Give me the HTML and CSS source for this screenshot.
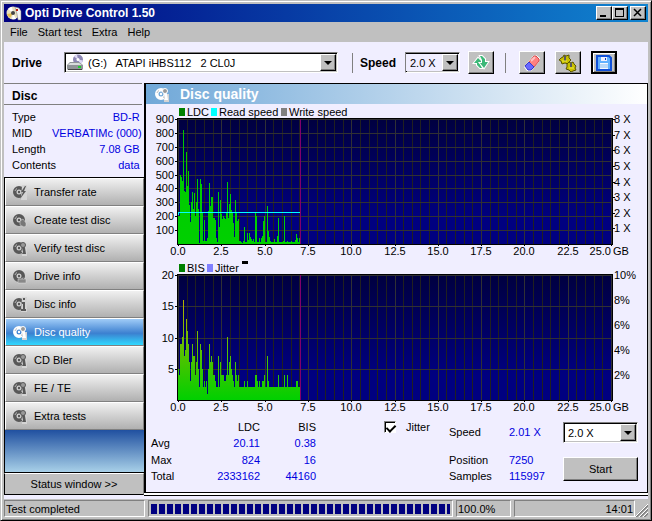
FILE: index.html
```
<!DOCTYPE html>
<html lang="en">

<head>
    <meta charset="UTF-8">
    <title>Opti Drive Control 1.50</title>
    <link rel="stylesheet" href="styles.css">
</head>

<body>
    <svg class="defs" width="0" height="0" aria-hidden="true">
        <defs>
            <symbol id="disc" viewBox="0 0 15 15">
                <path fill="currentColor" fill-rule="evenodd" d="M7 1a6 6 0 1 0 0 12a6 6 0 1 0 0-12zM7 4.500a2.500 2.500 0 1 1 0 5a2.500 2.500 0 1 1 0-5z" />
                <circle cx="7" cy="7" r="1.200" fill="currentColor" />
                <path class="shine" d="M3 6a4 4 0 0 1 2-2.500M11 8.500a4 4 0 0 1-2 2" />
            </symbol>
            <symbol id="magnify" viewBox="0 0 15 15">
                <use href="#disc" />
                <path class="gap" d="M10 7h5v8h-5z" />
                <circle class="lens" cx="11" cy="4" r="2.500" />
                <path fill="currentColor" d="M10 7h3l1 6h-4l1-2z" />
            </symbol>
        </defs>
    </svg>

    <div class="window">
        <header class="title">
            <svg width="16" height="16" viewBox="0 0 16 16">
                <circle cx="7" cy="8" r="6.500" fill="#e8e0c0" />
                <path d="M7 8L2 4a6 6 0 0 1 4-2zM7 8l3 6a6 6 0 0 1-4 0z" fill="#fff" />
                <path d="M7 8L1 9a6 6 0 0 0 3 4z" fill="#e8c050" />
                <circle cx="7" cy="8" r="2" fill="#444" />
                <path d="M9 2l4 1 2 3v9h-3l-1-6z" fill="#f4f4f4" stroke="#777" stroke-width=".5" />
                <path d="M10 4h2v2h-2z" fill="#c02010" />
            </svg>
            <h1>Opti Drive Control 1.50</h1>
            <button class="cap" aria-label="Minimize"><svg width="12" height="10"><path d="M2 7h6v2H2z" /></svg></button>
            <button class="cap" aria-label="Maximize"><svg width="12" height="10"><path fill-rule="evenodd" d="M1 0h9v9H1zM2 2v6h7V2z" /></svg></button>
            <button class="cap close" aria-label="Close"><svg width="12" height="10"><path d="M2 1l7 7M9 1l-7 7" stroke="#000" stroke-width="1.500" /></svg></button>
        </header>

        <nav class="menu">
            <a href="#">File</a>
            <a href="#">Start test</a>
            <a href="#">Extra</a>
            <a href="#">Help</a>
        </nav>

        <div class="toolbar">
            <label class="drive-label" for="drive">Drive</label>
            <div class="combo drive">
                <svg class="drive-icon" width="17" height="17" viewBox="0 0 17 17">
                    <circle cx="11" cy="5.500" r="5" fill="#8c86b4" />
                    <path d="M11 5.500l-4-3a5 5 0 0 1 3-2zM11 5.500l5 1a5 5 0 0 1-3 3.500z" fill="#ddd8f4" />
                    <circle cx="11" cy="5.500" r="1.500" fill="#fff" />
                    <path d="M3 8h9l4 3v4l-1 1H1l-1-1v-4z" fill="#909498" />
                    <path d="M3 9h9l3 2H1z" fill="#d8dcdc" />
                    <path d="M1 15h14v1H1z" fill="#444" />
                    <path d="M11 12h3v2h-3z" fill="#20d030" />
                </svg>
                <select id="drive">
                    <option>(G:)&nbsp;&nbsp; ATAPI iHBS112 &nbsp;&nbsp;2 CL0J</option>
                </select>
                <span class="arrow"></span>
            </div>
            <span class="sep"></span>
            <label class="speed-label" for="speed">Speed</label>
            <div class="combo speed">
                <select id="speed">
                    <option>2.0 X</option>
                </select>
                <span class="arrow"></span>
            </div>
            <button class="tool" aria-label="Refresh">
                <svg width="18" height="18" viewBox="0 0 18 18">
                    <g fill="#3cb878" stroke="#fff" stroke-width="2" paint-order="stroke">
                        <path d="M2 9l4-5 4 4H8v2l2 4H8L5 11V9z" />
                        <path d="M16 8l-4 6-4-5h2V6L8 2h2l3 3v3z" />
                    </g>
                </svg>
            </button>
            <span class="sep"></span>
            <button class="tool" aria-label="Erase">
                <svg width="18" height="18" viewBox="0 0 18 18">
                    <path d="M1 13l9-11 3-1 4 3-1 4-8 9H4z" fill="#fff" />
                    <path d="M6 8l5-6h2l3 3v2l-5 6z" fill="#ff8080" stroke="#d84848" />
                    <path d="M2 12l4-4 5 5-3 3H5z" fill="#6868ff" stroke="#3838d0" />
                    <path d="M8 7l4-4" stroke="#ffc0c0" stroke-width="2" />
                </svg>
            </button>
            <button class="tool" aria-label="Options">
                <svg width="18" height="18" viewBox="0 0 18 18">
                    <g fill="#c8c000" stroke="#585400">
                        <path d="M2 4l2-1 1-2 2 1 3-1v3l2 2-2 2-1 2-3-1-3 1-1-3-2-1z" />
                        <path d="M8 10l2-2 2 1 2-1 1 2 2 2-1 2 1 2-3 1-2 1-2-2-3-1 1-2z" />
                    </g>
                    <path d="M6 2v5M12 9v4" stroke="#585860" stroke-width="2" />
                    <path d="M3 7h5M10 14h5" stroke="#eee840" />
                </svg>
            </button>
            <button class="tool default" aria-label="Save">
                <svg width="16" height="16" viewBox="0 0 16 16">
                    <path d="M1 1h12l2 2v12H1z" fill="#60b0ff" stroke="#1050d8" stroke-width="2" />
                    <path d="M5 2h6v4H5z" fill="#f0f0ff" />
                    <path d="M9 3h1v2H9z" fill="#0838c0" />
                    <path d="M4 8h8v6H4z" fill="#f4f8ff" />
                    <path d="M4 10h8M4 12h8" stroke="#80b8f0" />
                </svg>
            </button>
        </div>

        <main class="main">
            <aside class="side">
                <h2>Disc</h2>
                <dl class="info">
                    <dt>Type</dt>
                    <dd>BD-R</dd>
                    <dt>MID</dt>
                    <dd class="mid">VERBATIMc (000)</dd>
                    <dt>Length</dt>
                    <dd>7.08 GB</dd>
                    <dt>Contents</dt>
                    <dd>data</dd>
                </dl>
                <div class="tests">
                    <button><svg width="15" height="15"><use href="#disc" /><path class="gap" d="M10 0h5v15H9z" /><path fill="currentColor" d="M13 1l-4 6h2l-3 7 6-8h-2l2-5z" /></svg>Transfer rate</button>
                    <button><svg width="15" height="15"><use href="#disc" /><path fill="#777" stroke="#ddd" stroke-width=".5" d="M8 8l3-2 3 4v3l-2 1-4-2z" /></svg>Create test disc</button>
                    <button><svg width="15" height="15"><use href="#magnify" /></svg>Verify test disc</button>
                    <button><svg width="15" height="15"><use href="#disc" /><path fill="#888" stroke="#ddd" stroke-width=".5" d="M6 10h8v4H6z" /></svg>Drive info</button>
                    <button><svg width="15" height="15"><use href="#disc" /><path class="gap" d="M10 0h5v15H9z" /><path fill="currentColor" d="M11 1h2v2h-2zM10 5h3v7h1v2H9v-2h2V7h-1z" /></svg>Disc info</button>
                    <button class="active"><svg width="15" height="15"><use href="#magnify" /></svg>Disc quality</button>
                    <button><svg width="15" height="15"><use href="#magnify" /></svg>CD Bler</button>
                    <button><svg width="15" height="15"><use href="#magnify" /></svg>FE / TE</button>
                    <button><svg width="15" height="15"><use href="#magnify" /></svg>Extra tests</button>
                </div>
                <button class="status-btn">Status window &gt;&gt;</button>
            </aside>

            <section class="panel">
                <h2><svg width="15" height="15"><use href="#magnify" /></svg>Disc quality</h2>
                <svg class="chart" id="ldc" viewBox="0 0 501 156"></svg>
                <svg class="chart" id="bis" viewBox="0 0 501 156"></svg>

                <div class="results">
                    <table>
                        <tr><th></th><th>LDC</th><th>BIS</th></tr>
                        <tr><th>Avg</th><td>20.11</td><td>0.38</td></tr>
                        <tr><th>Max</th><td>824</td><td>16</td></tr>
                        <tr><th>Total</th><td>2333162</td><td>44160</td></tr>
                    </table>
                    <label class="jitter"><input type="checkbox" checked>Jitter</label>
                    <dl class="progress-info">
                        <dt>Speed</dt>
                        <dd>2.01 X</dd>
                        <dt>Position</dt>
                        <dd>7250</dd>
                        <dt>Samples</dt>
                        <dd>115997</dd>
                    </dl>
                    <div class="run">
                        <div class="combo">
                            <select aria-label="Test speed">
                                <option>2.0 X</option>
                            </select>
                            <span class="arrow"></span>
                        </div>
                        <button class="start">Start</button>
                    </div>
                </div>
            </section>
        </main>

        <footer class="status">
            <div class="cell msg">Test completed</div>
            <div class="cell bar" role="progressbar" aria-valuenow="100" aria-label="Progress"><div></div></div>
            <div class="cell pct">100.0%</div>
            <div class="cell clock">14:01</div>
            <svg class="grip" width="13" height="13"><path d="M1 13L13 1M5 13l8-8M9 13l4-4" stroke="#808080" stroke-width="2" /><path d="M0 13L13 0M4 13l9-9M8 13l5-5" stroke="#fff" /></svg>
        </footer>
    </div>

    <script src="script.js"></script>
</body>

</html>
```
FILE: styles.css
```
* {
    box-sizing: border-box;
    margin: 0;
    padding: 0;
}

body {
    font-family: "Liberation Sans", Arial, sans-serif;
    font-size: 11px;
    line-height: 16px;
    color: #000;
}

button,
select,
input {
    font: inherit;
    color: inherit;
}

.defs {
    position: absolute;
}

.window {
    min-height: 100vh;
    display: flex;
    flex-direction: column;
    padding: 3px;
    background: #c0c0c0;
    border: 1px solid;
    border-color: #c0c0c0 #000 #000 #c0c0c0;
    box-shadow: inset 1px 1px #fff, inset -1px -1px #808080;
}

/* title bar */
.title {
    height: 18px;
    display: flex;
    align-items: center;
    padding: 0 2px;
    background: linear-gradient(to right, #000080, #1084d0);
}

.title h1 {
    flex: 1;
    margin-left: 3px;
    font-size: 12px;
    color: #fff;
}

.cap {
    width: 16px;
    height: 14px;
    background: #c0c0c0;
    border: 1px solid;
    border-color: #fff #000 #000 #fff;
    box-shadow: inset -1px -1px #808080;
}

.cap svg {
    display: block;
    margin: 1px;
}

.close {
    margin-left: 2px;
}

.menu {
    height: 20px;
    display: flex;
    gap: 10px;
    padding: 2px 6px;
}

.menu a {
    color: #000;
    text-decoration: none;
}

/* toolbar */
.toolbar {
    height: 41px;
    display: flex;
    align-items: center;
    padding: 0 31px 0 8px;
    background: #f0eeff;
}

.drive-label,
.speed-label {
    font-size: 12px;
    font-weight: bold;
}

.drive-label {
    width: 52px;
}

.speed-label {
    width: 45px;
}

.combo {
    position: relative;
    height: 21px;
    display: flex;
    align-items: center;
    background: #fff;
    border: 1px solid;
    border-color: #808080 #fff #fff #808080;
    box-shadow: inset 1px 1px #000, inset -1px -1px #c0c0c0;
}

.combo select {
    flex: 1;
    min-width: 0;
    height: 17px;
    padding-left: 4px;
    border: 0;
    background: none;
    appearance: none;
}

.drive {
    flex: 1;
}

.drive-icon {
    margin-left: 2px;
}

.speed {
    width: 55px;
    margin-right: 8px;
}

.speed,
.speed select {
    background: #f0eeff;
}

.arrow {
    position: absolute;
    top: 1px;
    right: 1px;
    bottom: 1px;
    width: 16px;
    background: #c0c0c0;
    border: 1px solid;
    border-color: #fff #000 #000 #fff;
    box-shadow: inset -1px -1px #808080;
    pointer-events: none;
}

.arrow::after {
    content: "";
    position: absolute;
    top: 6px;
    left: 3px;
    border: 4px solid transparent;
    border-top-color: #000;
    border-bottom: 0;
}

.sep {
    width: 1px;
    height: 20px;
    margin: 0 7px 0 14px;
    background: #808080;
}

.tool {
    width: 26px;
    height: 23px;
    display: flex;
    align-items: center;
    justify-content: center;
    background: #c0c0c0;
    border: 1px solid;
    border-color: #fff #000 #000 #fff;
    box-shadow: inset -1px -1px #808080;
}

.tool + .sep {
    margin: 0 13px 0 11px;
}

.tool + .tool {
    margin-left: 10px;
}

.default {
    border: 2px solid #000;
    box-shadow: inset 1px 1px #fff, inset -1px -1px #808080;
}

/* left column */
.main {
    flex: 1;
    display: flex;
    background: #f0eeff;
}

.side {
    width: 140px;
    margin-bottom: 4px;
    display: flex;
    flex-direction: column;
}

.side h2 {
    height: 22px;
    margin-right: 2px;
    padding: 4px 8px;
    line-height: 16px;
    font-size: 12px;
    border-top: 1px solid #808080;
    border-bottom: 1px solid #808080;
}

.info {
    display: grid;
    grid-template-columns: 40px 1fr;
    padding: 4px 5px 4px 8px;
    height: 72px;
    grid-auto-rows: 16px;
}

dd {
    color: #0000e0;
}

.info dd {
    text-align: right;
}

.info .mid {
    margin-right: -2px;
    white-space: nowrap;
}

.tests {
    flex: 1;
    border: solid #000;
    border-width: 1px 0 1px 1px;
    background: linear-gradient(#2050a0 252px, #a8d0e8);
}

.tests button {
    width: 100%;
    height: 28px;
    display: flex;
    align-items: center;
    gap: 7px;
    padding-left: 6px;
    color: #000;
    background: linear-gradient(#f0f0f0, #b0b0b0);
    border: 1px solid;
    border-color: #fff #808080 #808080 #fff;
}

.tests svg {
    color: #585858;
}

.shine {
    fill: none;
    stroke: #bbb;
}

.gap {
    fill: #d4d4d4;
}

.lens {
    fill: #999;
    stroke: currentColor;
}

.tests .active {
    color: #fff;
    background: linear-gradient(#a0ccf8, #3c80d0 55%, #30d8ff);
}

.active svg,
.panel h2 svg {
    color: #fff;
}

.active .gap,
.panel .gap {
    fill: #6ca4e0;
}

.active .lens,
.panel .lens {
    fill: #d0e4f8;
}

.status-btn {
    height: 22px;
    background: #c0c0c0;
    border: 1px solid;
    border-color: #fff #808080 #000 #000;
}

/* right side */
.panel {
    flex: 1;
    margin-bottom: 6px;
    display: flex;
    flex-direction: column;
    border: 1px solid #000;
    border-left-width: 2px;
    box-shadow: 0 2px #fff, 0 3px #000;
}

.panel h2 {
    height: 20px;
    display: flex;
    align-items: center;
    gap: 11px;
    padding-left: 8px;
    font-size: 14px;
    color: #fff;
    background: linear-gradient(to right, #70a8d8, #fff);
}

.chart {
    display: block;
    width: 100%;
    font-size: 11px;
}

.chart rect {
    shape-rendering: crispEdges;
}

.results {
    display: flex;
    gap: 18px;
    padding: 3px 9px 0 5px;
}

.results table {
    width: 165px;
    margin-right: auto;
    border-collapse: collapse;
    table-layout: fixed;
}

.results th,
.results td {
    height: 16px;
    text-align: right;
    font-weight: normal;
}

.results td {
    color: #0000e0;
}

.results th:first-child {
    width: 48px;
    text-align: left;
}

.results th:nth-child(2) {
    width: 61px;
}

.jitter {
    width: 47px;
    height: 16px;
    display: flex;
    align-items: center;
    gap: 10px;
}

.jitter input {
    flex: none;
    position: relative;
    width: 12px;
    height: 12px;
    appearance: none;
    background: #fff;
    border: 1px solid;
    border-color: #808080 #fff #fff #808080;
    box-shadow: inset 1px 1px #000;
}

.jitter input:checked::after {
    content: "";
    position: absolute;
    top: 1px;
    left: 3px;
    width: 4px;
    height: 7px;
    border: solid #000;
    border-width: 0 2px 2px 0;
    transform: rotate(45deg);
}

.progress-info {
    display: grid;
    grid-template: 28px 16px 16px / 60px 36px;
    padding-top: 5px;
}

.run {
    width: 75px;
    padding-top: 3px;
}

.start {
    width: 100%;
    height: 24px;
    margin-top: 14px;
    background: #c0c0c0;
    border: 1px solid;
    border-color: #fff #000 #000 #fff;
    box-shadow: inset -1px -1px #808080;
}

/* status bar */
.status {
    height: 18px;
    display: flex;
    gap: 3px;
    padding-top: 1px;
}

.cell {
    padding: 0 1px;
    line-height: 16px;
    border: 1px solid;
    border-color: #808080 #fff #fff #808080;
}

.msg {
    width: 141px;
}

.bar {
    flex: 1;
    padding: 3px 2px;
}

.bar div {
    height: 10px;
    background: repeating-linear-gradient(to right, #000080 0 6px, #c0c0c0 6px 8px);
}

.pct {
    width: 55px;
}

.clock {
    width: 121px;
    text-align: right;
}

.grip {
    align-self: flex-end;
    margin-left: -3px;
}
```
FILE: script.js
```
var NS = "http://www.w3.org/2000/svg"

// plot area inside the chart
var L = 32, T = 15, W = 433, H = 125

var ldc = [200, 200, 500, 485, 450, 824, 385, 375, 660, 420, 522, 280, 155, 300, 372, 255, 365, 200, 300, 470,
    255, 10, 470, 435, 220, 20, 170, 20, 20, 40, 240, 437, 270, 335, 335, 185, 185, 170, 40, 15,
    372, 125, 315, 215, 180, 200, 185, 180, 220, 445, 185, 290, 357, 242, 220, 150, 50, 315, 220, 165,
    180, 25, 25, 15, 10, 20, 125, 15, 15, 80, 30, 80, 50, 35, 25, 35, 15, 225, 205, 12,
    12, 40, 15, 40, 60, 165, 200, 15, 12, 275, 90, 50, 25, 12, 12, 12, 35, 15, 15, 55,
    190, 15, 15, 15, 15, 20, 200, 15, 15, 20, 15, 15, 15, 20, 15, 15, 15, 30, 75, 45, 15, 45]

var bis = [5, 4, 9, 9, 10, 16, 7, 8, 13, 11, 9, 6, 3, 6, 9, 7, 7, 4, 6, 11,
    5, 2, 9, 8, 5, 2, 3, 2, 3, 1, 5, 9, 6, 7, 6, 4, 4, 3, 2, 2,
    7, 2, 6, 4, 4, 4, 3, 3, 4, 10, 4, 6, 7, 5, 4, 3, 2, 6, 4, 3,
    4, 2, 2, 2, 2, 2, 3, 2, 2, 3, 2, 2, 2, 2, 2, 2, 2, 4, 4, 3,
    2, 3, 2, 2, 3, 3, 4, 2, 2, 7, 3, 2, 2, 2, 2, 2, 2, 2, 2, 2,
    4, 2, 2, 2, 2, 2, 4, 2, 2, 4, 2, 2, 2, 2, 2, 2, 2, 2, 3, 3, 2, 2, 2]

function add(svg, tag, attrs, text) {
    var el = document.createElementNS(NS, tag)
    for (var k in attrs) {
        el.setAttribute(k, attrs[k])
    }
    if (text) {
        el.textContent = text
    }
    svg.appendChild(el)
    return el
}

function rect(svg, x, y, w, h, fill) {
    add(svg, "rect", { x: x, y: y, width: w, height: h, fill: fill })
}

function gradient(svg, id, y1, y2, from, to) {
    var g = add(svg, "linearGradient", { id: id, gradientUnits: "userSpaceOnUse", x1: 0, x2: 0, y1: y1, y2: y2 })
    add(g, "stop", { offset: 0, "stop-color": from })
    add(g, "stop", { offset: 1, "stop-color": to })
}

function drawChart(o) {
    var svg = document.getElementById(o.id)
    var i, x, y, h

    gradient(svg, o.id + "Bg", T, T + 100, "#000040", "#000080")
    gradient(svg, o.id + "Bar", T + 20, T + H, o.high, "#00d000")

    for (i = 0; i < o.legend.length; i++) {
        rect(svg, o.legend[i].x, 4, 6, 8, o.legend[i].color)
        add(svg, "text", { x: o.legend[i].x + 8, y: 12 }, o.legend[i].name)
    }

    rect(svg, L - 1, T - 1, W + 3, H + 2, "#000")
    rect(svg, L, T, W, H, "url(#" + o.id + "Bg)")

    // every half GB, stronger every 2.5
    for (i = 0; i <= 50; i++) {
        x = L + Math.round(i * W / 50)
        rect(svg, x, T, 1, H, i % 5 ? "#202020" : "#303034")
        if (i % 5 == 0) {
            rect(svg, x, T + H, 1, 2, "#000")
        }
    }

    for (i = 0; i < o.rows; i++) {
        y = T + Math.round(i * H / o.rows)
        rect(svg, L, y, W, 1, "#303034")
        rect(svg, L - 3, y, 3, 1, "#000")
        add(svg, "text", { x: L - 4, y: y + 4, "text-anchor": "end" }, o.max - i * o.max / o.rows)
    }

    for (i = 0; i < o.data.length; i++) {
        h = Math.round(o.data[i] / o.max * H)
        rect(svg, L + i, T + H - h, 1, h, "url(#" + o.id + "Bar)")
    }
    rect(svg, L + 122, T, 1, H, "#80006c")

    for (i = 0; i < o.right.length; i++) {
        y = T + Math.round(i * H / o.right.length)
        if (o.ticks) {
            rect(svg, L + W + 1, y, 3, 1, "#000")
        }
        add(svg, "text", { x: L + W + 3, y: y + 4 }, o.right[i])
    }

    for (i = 0; i < 10; i++) {
        add(svg, "text", { x: L + Math.round(i * W / 10), y: 151, "text-anchor": "middle" }, (i * 2.5).toFixed(1))
    }
    add(svg, "text", { x: L + W, y: 151, "text-anchor": "end" }, "25.0")
    add(svg, "text", { x: L + W + 2, y: 151 }, "GB")
    return svg
}

var top1 = drawChart({
    id: "ldc",
    data: ldc,
    max: 900,
    rows: 9,
    high: "#00c800",
    ticks: true,
    right: ["8 X", "7 X", "6 X", "5 X", "4 X", "3 X", "2 X", "1 X"],
    legend: [
        { x: 33, name: "LDC", color: "#008000" },
        { x: 65, name: "Read speed", color: "#00ffff" },
        { x: 135, name: "Write speed", color: "#808080" }
    ]
})
// read speed line
rect(top1, L, T + 93, 122, 1, "#00ffff")
rect(top1, L, T + 93, 1, 3, "#00ffff")

var top2 = drawChart({
    id: "bis",
    data: bis,
    max: 20,
    rows: 4,
    high: "#c0b000",
    right: ["10%", "8%", "6%", "4%", "2%"],
    legend: [
        { x: 33, name: "BIS", color: "#008000" },
        { x: 61, name: "Jitter", color: "#8080ff" }
    ]
})
rect(top2, 96, 1, 6, 3, "#000")
```
